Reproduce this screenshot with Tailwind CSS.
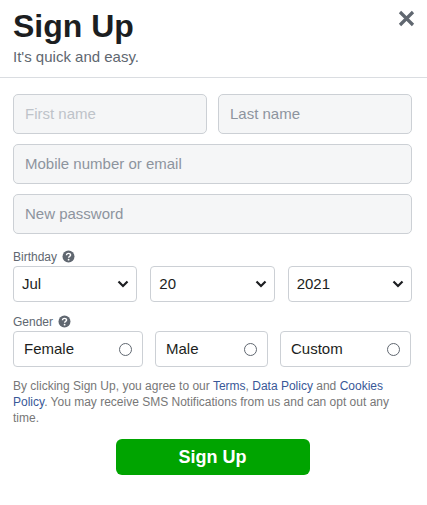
<!DOCTYPE html>
<html lang="en">
<head>
    <meta charset="UTF-8">
    <meta name="viewport" content="width=device-width, initial-scale=1.0">
    <title>Sign Up</title>
    <script src="https://cdn.jsdelivr.net/npm/@tailwindcss/browser@4"></script>
</head>
<body class="bg-white h-[505px] w-[427px] overflow-hidden font-['Liberation_Sans',Arial,sans-serif]">
    <!-- Header -->
    <header class="relative h-[78px] border-b border-[#dadde1] pl-[13px] pt-[7px]">
        <h1 class="text-[32px] leading-[38px] font-bold text-[#1c1e21]">Sign Up</h1>
        <p class="text-[15px] leading-[24px] text-[#606770]">It's quick and easy.</p>
        <svg class="absolute left-[398px] top-[10px] w-[17px] h-[17px]" viewBox="0 0 17 17" fill="none" stroke="#606770" stroke-width="3.2">
            <path d="M2 2 L15 15 M15 2 L2 15"/>
        </svg>
    </header>

    <form class="pl-[13px] pr-[15px] pt-[16px]">
        <div class="flex gap-[11px] mb-[10px]">
            <div class="w-[194px] h-[40px] flex items-center px-[11px] bg-[#f5f6f7] border border-[#ccd0d5] rounded-[5px] text-[15px] text-[#bec3c9]">First name</div>
            <div class="w-[194px] h-[40px] flex items-center px-[11px] bg-[#f5f6f7] border border-[#ccd0d5] rounded-[5px] text-[15px] text-[#8d949e]">Last name</div>
        </div>
        <div class="h-[40px] flex items-center px-[11px] mb-[10px] bg-[#f5f6f7] border border-[#ccd0d5] rounded-[5px] text-[15px] text-[#8d949e]">Mobile number or email</div>
        <div class="h-[40px] flex items-center px-[11px] bg-[#f5f6f7] border border-[#ccd0d5] rounded-[5px] text-[15px] text-[#8d949e]">New password</div>

        <!-- Birthday -->
        <div class="flex items-center gap-[5px] mt-[14px] h-[17px] text-[12px] text-[#606770]">
            Birthday
            <svg class="w-[13px] h-[13px]" viewBox="0 0 13 13">
                <circle cx="6.5" cy="6.5" r="6" fill="#606770"/>
                <path d="M4.5 5.2 C4.5 2.8 8.6 2.9 8.6 5 C8.6 6.4 6.6 6.3 6.6 7.8" fill="none" stroke="#fff" stroke-width="1.4"/>
                <circle cx="6.6" cy="9.7" r="0.9" fill="#fff"/>
            </svg>
        </div>
        <div class="flex gap-[13px] mt-[1px]">
            <div class="w-[125px] h-[36px] flex items-center justify-between pl-[8px] pr-[7px] border border-[#ccd0d5] rounded-[4px] text-[15px] text-[#1c1e21]">
                Jul
                <svg class="w-[12px] h-[8px]" viewBox="0 0 12 8" fill="none" stroke="#1c1e21" stroke-width="2.2"><path d="M1.5 1.5 L6 6 L10.5 1.5"/></svg>
            </div>
            <div class="w-[125px] h-[36px] flex items-center justify-between pl-[8px] pr-[7px] border border-[#ccd0d5] rounded-[4px] text-[15px] text-[#1c1e21]">
                20
                <svg class="w-[12px] h-[8px]" viewBox="0 0 12 8" fill="none" stroke="#1c1e21" stroke-width="2.2"><path d="M1.5 1.5 L6 6 L10.5 1.5"/></svg>
            </div>
            <div class="w-[125px] h-[36px] flex items-center justify-between pl-[8px] pr-[7px] border border-[#ccd0d5] rounded-[4px] text-[15px] text-[#1c1e21]">
                2021
                <svg class="w-[12px] h-[8px]" viewBox="0 0 12 8" fill="none" stroke="#1c1e21" stroke-width="2.2"><path d="M1.5 1.5 L6 6 L10.5 1.5"/></svg>
            </div>
        </div>

        <!-- Gender -->
        <div class="flex items-center gap-[5px] mt-[11px] h-[17px] text-[12px] text-[#606770]">
            Gender
            <svg class="w-[13px] h-[13px]" viewBox="0 0 13 13">
                <circle cx="6.5" cy="6.5" r="6" fill="#606770"/>
                <path d="M4.5 5.2 C4.5 2.8 8.6 2.9 8.6 5 C8.6 6.4 6.6 6.3 6.6 7.8" fill="none" stroke="#fff" stroke-width="1.4"/>
                <circle cx="6.6" cy="9.7" r="0.9" fill="#fff"/>
            </svg>
        </div>
        <div class="flex gap-[12px] mt-[1px]">
            <div class="w-[130px] h-[36px] flex items-center justify-between pl-[10px] pr-[10px] border border-[#ccd0d5] rounded-[4px] text-[15px] text-[#1c1e21]">
                Female
                <span class="w-[13px] h-[13px] rounded-full border border-[#606770]"></span>
            </div>
            <div class="w-[113px] h-[36px] flex items-center justify-between pl-[10px] pr-[10px] border border-[#ccd0d5] rounded-[4px] text-[15px] text-[#1c1e21]">
                Male
                <span class="w-[13px] h-[13px] rounded-full border border-[#606770]"></span>
            </div>
            <div class="w-[131px] h-[36px] flex items-center justify-between pl-[10px] pr-[10px] border border-[#ccd0d5] rounded-[4px] text-[15px] text-[#1c1e21]">
                Custom
                <span class="w-[13px] h-[13px] rounded-full border border-[#606770]"></span>
            </div>
        </div>

        <p class="mt-[11px] w-[392px] text-[12px] leading-[16px] text-[#777777]">
            By clicking Sign Up, you agree to our <a class="text-[#385898]">Terms</a>, <a class="text-[#385898]">Data Policy</a> and <a class="text-[#385898]">Cookies Policy</a>. You may receive SMS Notifications from us and can opt out any time.
        </p>

        <div class="flex justify-center mt-[13px] w-[399px]">
            <button type="button" class="w-[194px] h-[36px] bg-[#00a400] rounded-[6px] text-white text-[18px] font-bold">Sign Up</button>
        </div>
    </form>
</body>
</html>
